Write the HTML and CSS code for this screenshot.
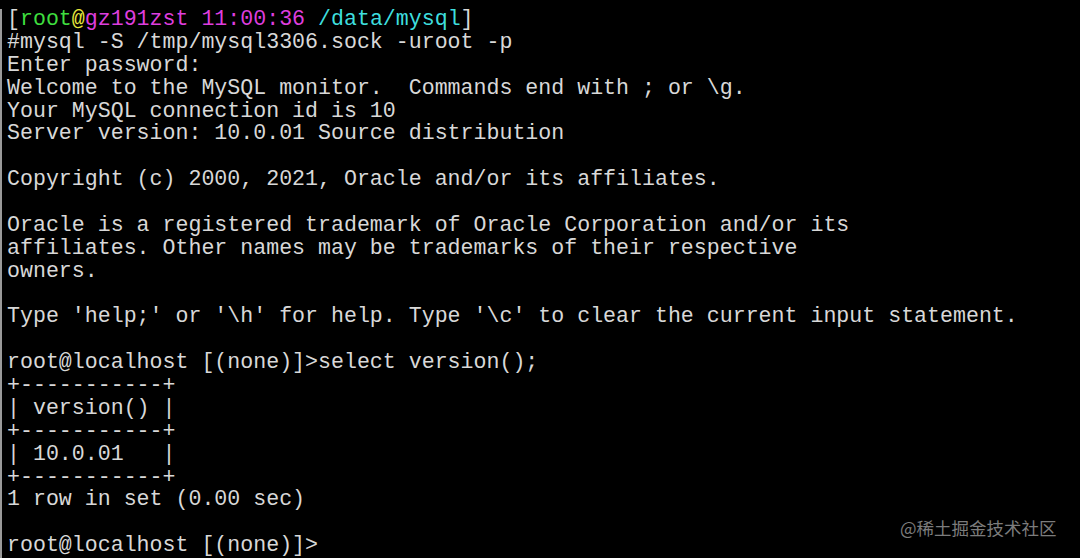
FILE: index.html
```html
<!DOCTYPE html>
<html>
<head>
<meta charset="utf-8">
<link rel="stylesheet" href="styles.css">
</head>
<body>
<div class="term">
<pre class="out">[<span class="g">root</span><span class="y">@</span><span class="m">gz191zst 11:00:36</span> <span class="c">/data/mysql</span>]
#mysql -S /tmp/mysql3306.sock -uroot -p
Enter password:
Welcome to the MySQL monitor.  Commands end with ; or \g.
Your MySQL connection id is 10
Server version: 10.0.01 Source distribution

Copyright (c) 2000, 2021, Oracle and/or its affiliates.

Oracle is a registered trademark of Oracle Corporation and/or its
affiliates. Other names may be trademarks of their respective
owners.

Type 'help;' or '\h' for help. Type '\c' to clear the current input statement.

root@localhost [(none)]>select version();
+-----------+
| version() |
+-----------+
| 10.0.01   |
+-----------+
1 row in set (0.00 sec)

root@localhost [(none)]></pre>
</div>
<div class="mark">@稀土掘金技术社区</div>
</body>
</html>
```
FILE: styles.css
```css
html, body {
  margin: 0;
  padding: 0;
  background: #000;
  width: 1080px;
  height: 558px;
  overflow: hidden;
}
.term {
  margin-top: 9px;
  height: 549px;
  border-left: 2px solid #9a9a9a;
  box-sizing: border-box;
}
.out {
  margin: 0;
  padding: 0 0 0 5px;
  position: relative;
  top: -1px;
  font-family: "Liberation Mono", "Courier New", monospace;
  font-size: 21.6px;
  line-height: 22.87px;
  color: #d8d8d8;
  white-space: pre;
}
.g { color: #3ede3e; }
.y { color: #e6e63c; }
.m { color: #de3ede; }
.c { color: #3edede; }
.mark {
  position: absolute;
  left: 900px;
  top: 517px;
  font-family: "Noto Sans CJK SC", "Noto Sans", sans-serif;
  font-size: 17.5px;
  line-height: 22px;
  color: #7c7c7c;
}
```
